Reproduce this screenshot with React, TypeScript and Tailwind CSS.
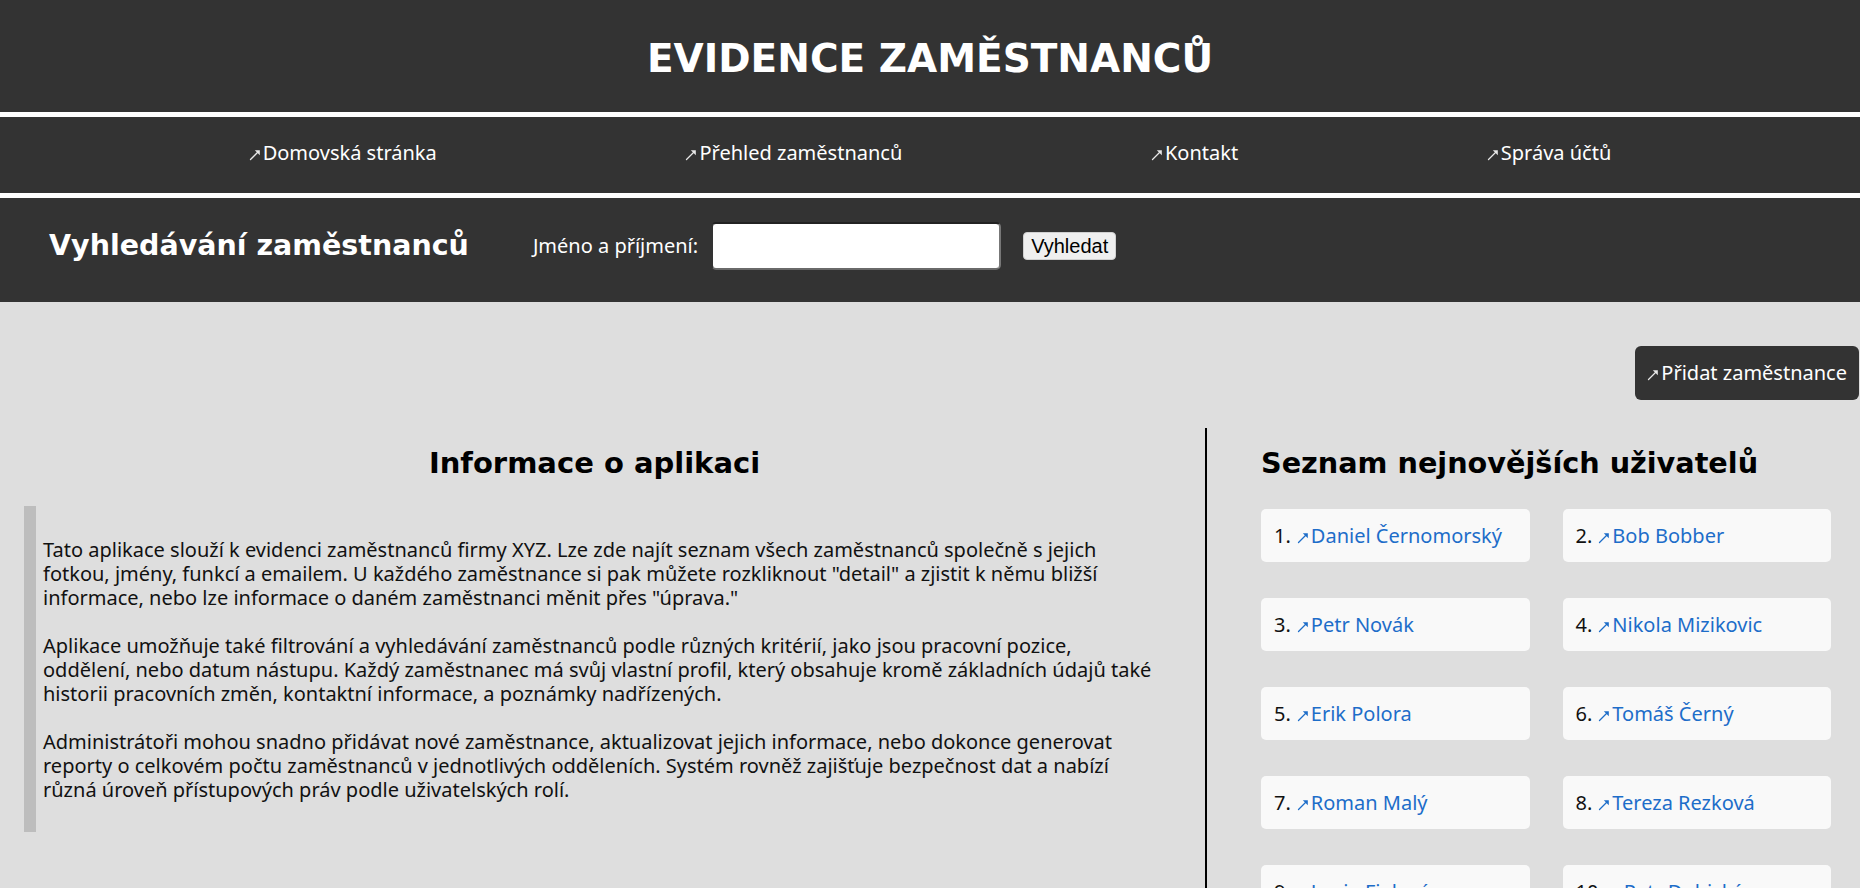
import React from "react";

const Arrow = ({ className = "" }: { className?: string }) => (
  <svg
    viewBox="0 0 12 12"
    className={"w-[12px] h-[12px] mr-[2px] self-center translate-y-[2px] shrink-0 " + className}
    fill="none"
  >
    <path d="M1.5 10.5 L9 3" stroke="currentColor" strokeWidth="1.3" strokeLinecap="round" />
    <path d="M10.8 1.2 L10.8 6.2 L5.8 1.2 Z" fill="currentColor" />
  </svg>
);

const navItems = ["Domovská stránka", "Přehled zaměstnanců", "Kontakt", "Správa účtů"];

const users = [
  "Daniel Černomorský",
  "Bob Bobber",
  "Petr Novák",
  "Nikola Mizikovic",
  "Erik Polora",
  "Tomáš Černý",
  "Roman Malý",
  "Tereza Rezková",
  "Lucie Fialová",
  "Petr Dubický",
];

export default function App() {
  return (
    <div className="min-h-screen bg-[#dedede] font-['Noto_Sans',sans-serif] text-[20px] leading-[24px] text-[#111]">
      <header className="h-[117px] bg-[#333333] border-b-[5px] border-white flex items-center justify-center pt-[6px]">
        <h1 className="font-['DejaVu_Sans',sans-serif] font-bold text-[39px] leading-[46px] text-white">
          EVIDENCE ZAMĚSTNANCŮ
        </h1>
      </header>

      <nav className="h-[81px] bg-[#333333] border-b-[5px] border-white flex items-center justify-evenly pb-[5px]">
        {navItems.map((n) => (
          <a key={n} className="text-white flex items-center">
            <Arrow className="text-[#e8e8e8]" />
            {n}
          </a>
        ))}
      </nav>

      <section className="h-[104px] bg-[#333333] flex items-center pl-[49px] pb-[8px]">
        <h2 className="font-['DejaVu_Sans',sans-serif] font-bold text-[28.5px] leading-[34px] text-white">
          Vyhledávání zaměstnanců
        </h2>
        <label className="ml-[64px] text-white">Jméno a příjmení:</label>
        <input
          type="text"
          className="ml-[13px] w-[290px] h-[48px] bg-white rounded-[5px] border-2 border-t-[#222] border-l-[#333] border-r-[#777] border-b-[#6a6a6a] outline-none"
        />
        <button className="ml-[22px] h-[28px] px-[7px] bg-[#efefef] rounded-[4px] border border-[#d0d0d0] font-['Liberation_Sans',Arial,sans-serif] text-[20px] leading-[22px] text-black">
          Vyhledat
        </button>
      </section>

      <div className="flex justify-end pt-[44px] pr-[1px]">
        <a className="h-[54px] px-[12px] bg-[#333333] rounded-[6px] text-white flex items-center">
          <Arrow className="text-[#e8e8e8]" />
          Přidat zaměstnance
        </a>
      </div>

      <main className="flex mt-[28px]">
        <div className="w-[1207px] shrink-0 border-r-2 border-black pb-10">
          <h2 className="mt-[17px] pr-[16px] text-center font-['DejaVu_Sans',sans-serif] font-bold text-[29px] leading-[36px] text-black">
            Informace o aplikaci
          </h2>
          <blockquote className="mt-[25px] ml-[24px] mr-[46px] border-l-[12px] border-[#bdbdbd] pl-[7px] pt-[12px] pb-[12px]">
            <p className="mt-[20px]">
              Tato aplikace slouží k evidenci zaměstnanců firmy XYZ. Lze zde najít seznam všech zaměstnanců společně s jejich
              fotkou, jmény, funkcí a emailem. U každého zaměstnance si pak můžete rozkliknout "detail" a zjistit k němu bližší
              informace, nebo lze informace o daném zaměstnanci měnit přes "úprava."
            </p>
            <p className="mt-[24px]">
              Aplikace umožňuje také filtrování a vyhledávání zaměstnanců podle různých kritérií, jako jsou pracovní pozice,
              oddělení, nebo datum nástupu. Každý zaměstnanec má svůj vlastní profil, který obsahuje kromě základních údajů také
              historii pracovních změn, kontaktní informace, a poznámky nadřízených.
            </p>
            <p className="mt-[24px] mb-[18px]">
              Administrátoři mohou snadno přidávat nové zaměstnance, aktualizovat jejich informace, nebo dokonce generovat
              reporty o celkovém počtu zaměstnanců v jednotlivých odděleních. Systém rovněž zajišťuje bezpečnost dat a nabízí
              různá úroveň přístupových práv podle uživatelských rolí.
            </p>
          </blockquote>
        </div>

        <div className="flex-1 pl-[54px] pr-[29px]">
          <h2 className="mt-[17px] font-['DejaVu_Sans',sans-serif] font-bold text-[28.7px] leading-[36px] text-black">
            Seznam nejnovějších uživatelů
          </h2>
          <ol className="mt-[28px] grid grid-cols-2 gap-x-[33px] gap-y-[36px]">
            {users.map((u, i) => (
              <li key={u} className="h-[53px] rounded-[5px] bg-[#f9f9f9] pl-[13px] flex items-center">
                <span className="mr-[6px]">{i + 1}.</span>
                <a className="text-[#1d6dc9] flex items-center">
                  <Arrow />
                  {u}
                </a>
              </li>
            ))}
          </ol>
        </div>
      </main>
    </div>
  );
}
